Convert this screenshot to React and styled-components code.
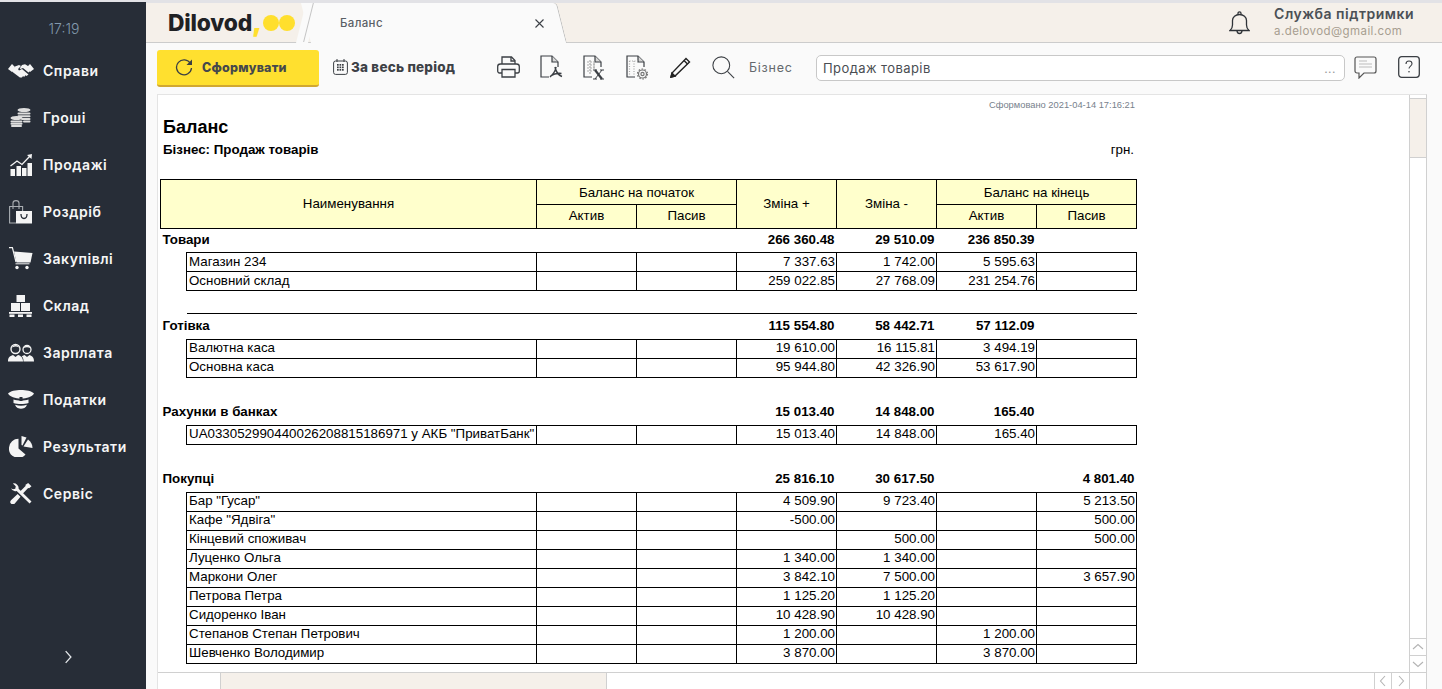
import React from "react";
import styled, { createGlobalStyle } from "styled-components";

const Global = createGlobalStyle`
  html, body { margin: 0; padding: 0; height: 100%; overflow: hidden; background: #fafafa; }
  #root { height: 100%; }
  * { box-sizing: border-box; }
`;

const UI = `"Inter", "Noto Sans", sans-serif`;
const DOC = `"Liberation Sans", Arial, sans-serif`;

const Shell = styled.div`
  display: grid;
  grid-template-columns: 146px 1fr;
  width: 1442px;
  height: 689px;
  overflow: hidden;
  font-family: ${UI};
`;

const Sidebar = styled.aside`
  background: #272d37;
  border-top: 2px solid #e2e2e6;
  display: flex;
  flex-direction: column;
  color: #fff;
`;
const Clock = styled.div`
  height: 45px;
  padding: 18px 18px 0 0;
  text-align: center;
  font-size: 14px;
  line-height: 18px;
  font-weight: 300;
  color: #8399ad;
  letter-spacing: 0;
`;
const Nav = styled.nav`
  display: flex;
  flex-direction: column;
  flex: 1;
`;
const NavItem = styled.a`
  height: 47px;
  display: flex;
  align-items: center;
  padding-left: 7px;
  gap: 9px;
  font-size: 14px;
  font-weight: 600;
  letter-spacing: 0.55px;
  color: #f6f6f6;
`;
const NavIcon = styled.span`
  width: 27px;
  height: 27px;
  display: flex;
  align-items: center;
  justify-content: center;
  flex: none;
`;
const Expand = styled.div`
  height: 41px;
  padding-left: 61px;
  color: #dfe3e8;
`;

const Main = styled.main`
  display: flex;
  flex-direction: column;
  min-width: 0;
  background: #fafafa;
`;

const Strip = styled.header`
  height: 43px;
  background: #f5f0ea;
  border-top: 3px solid #e2e2e6;
  border-bottom: 1px solid #cccccc;
  display: flex;
  align-items: stretch;
  padding-left: 1px;
`;
const LogoTab = styled.div`
  position: relative;
  z-index: 1;
  width: 162px;
  display: flex;
  align-items: center;
  padding-left: 21px;
  &::after {
    content: "";
    position: absolute;
    top: 0;
    bottom: 0;
    right: 0;
    width: 1px;
    background: #c4c4c4;
    transform: skewX(-14deg);
    transform-origin: center;
  }
`;
const LogoText = styled.span`
  font-size: 22.8px;
  font-weight: 800;
  letter-spacing: -0.2px;
  color: #1f2124;
  line-height: 30px;
  display: inline-flex;
  align-items: baseline;
`;
const LogoComma = styled.span`
  color: #ffdf2d;
  font-weight: 900;
  font-size: 27px;
  line-height: 20px;
`;
const LogoDot = styled.span`
  display: inline-block;
  width: 16px;
  height: 16px;
  border-radius: 50%;
  background: #ffdf2d;
  margin-left: ${p => p.$first ? "1px" : "0"};
`;
const ActiveTab = styled.div`
  position: relative;
  width: 252px;
  margin-left: 1px;
  margin-bottom: -1px;
  padding-left: 30px;
  padding-right: 18px;
  display: flex;
  align-items: center;
  justify-content: space-between;
  font-size: 11.5px;
  font-weight: 500;
  letter-spacing: 0.35px;
  color: #5a5f66;
  z-index: 0;
  &::before {
    content: "";
    position: absolute;
    inset: 0 0 0 -4px;
    background: #fafafa;
    border-right: 1px solid #bdbdbd;
    border-top-right-radius: 4px;
    transform: skewX(14deg);
    z-index: -1;
  }
  &::after {
    content: "";
    position: absolute;
    left: -9px;
    top: 0;
    bottom: 0;
    width: 12px;
    background: #fafafa;
    transform: skewX(-14deg);
    z-index: -1;
  }
`;
const StripRight = styled.div`
  margin-left: auto;
  display: flex;
  align-items: center;
  padding-right: 28px;
  gap: 24px;
`;
const Support = styled.div`
  display: flex;
  flex-direction: column;
  gap: 3px;
  margin-top: -2px;
`;
const SupportName = styled.div`
  font-size: 14px;
  line-height: 17px;
  font-weight: 600;
  letter-spacing: 0.5px;
  color: #4b5056;
`;
const SupportMail = styled.div`
  font-size: 11.5px;
  line-height: 13px;
  letter-spacing: 0.42px;
  color: #a79e90;
`;

const Toolbar = styled.div`
  height: 51px;
  display: flex;
  align-items: flex-start;
  padding: 7px 0 0 11px;
`;
const BuildButton = styled.button`
  width: 162px;
  height: 37px;
  border: none;
  border-bottom: 2px solid #d1a831;
  border-radius: 3px;
  background: #ffe02f;
  display: flex;
  align-items: center;
  padding: 0 0 0 18px;
  gap: 9px;
  font-family: ${UI};
  font-size: 12.5px;
  font-weight: 800;
  letter-spacing: 0.2px;
  color: #45484c;
`;
const PeriodButton = styled.div`
  display: flex;
  align-items: center;
  gap: 3px;
  height: 34px;
  margin-left: 14px;
  font-size: 13.5px;
  font-weight: 800;
  letter-spacing: 0.2px;
  color: #3d4146;
  width: 153px;
`;
const IconBar = styled.div`
  display: flex;
  align-items: center;
  height: 34px;
  gap: 20px;
  margin-left: 11px;
`;
const ToolIcon = styled.span`
  width: 23px;
  height: 26px;
  display: flex;
  align-items: center;
  justify-content: center;
`;
const FieldLabel = styled.span`
  height: 34px;
  display: flex;
  align-items: center;
  margin-left: 14px;
  width: 67px;
  font-size: 12.5px;
  letter-spacing: 0.75px;
  color: #64686d;
`;
const Field = styled.div`
  width: 529px;
  height: 26px;
  margin-top: 5px;
  background: #fff;
  border: 1px solid #c8c8c8;
  border-radius: 5px;
  display: flex;
  align-items: center;
  justify-content: space-between;
  padding: 0 8px 0 6px;
  font-size: 13px;
  letter-spacing: 0.42px;
  color: #4a4e53;
`;
const FieldDots = styled.span`
  color: #9a9a9a;
  font-size: 12px;
  letter-spacing: 0.5px;
`;
const EndIcon = styled.span`
  height: 34px;
  display: flex;
  align-items: center;
  margin-left: ${p => p.$gap}px;
`;

const Panel = styled.section`
  flex: 1;
  margin: 0 15px 0 11px;
  min-height: 0;
  background: #fff;
  border: 1px solid #e4e4e4;
  border-bottom: none;
  border-right: 1px solid #d0d0d0;
  display: grid;
  grid-template-columns: 1fr 17px;
  grid-template-rows: 1fr 17px;
`;
const ReportArea = styled.div`
  overflow: hidden;
  padding-left: 2px;
  font-family: ${DOC};
  color: #000;
  min-height: 0;
`;
const Report = styled.div`
  width: 976px;
`;
const Stamp = styled.div`
  height: 21px;
  padding: 5px 1px 0 0;
  text-align: right;
  font-size: 9.33px;
  line-height: 11px;
  color: #77818c;
`;
const Title = styled.h1`
  margin: 0;
  padding-left: 3px;
  font-size: 18px;
  line-height: 22px;
  font-weight: 700;
`;
const Meta = styled.div`
  display: flex;
  justify-content: space-between;
  padding: 4px 2px 0 3px;
  height: 41px;
  font-size: 13.33px;
  line-height: 16px;
`;
const MetaName = styled.b`
  font-weight: 700;
`;
const Sheet = styled.table`
  border-collapse: collapse;
  table-layout: fixed;
  width: 976px;
  font-size: 13.33px;
  line-height: 15px;
`;
const HeadCell = styled.th`
  background: #ffffcc;
  border: 1px solid #000;
  font-weight: 400;
  text-align: center;
  padding: 0 0 ${p => p.$lift || 0}px;
  height: ${p => p.$h || 25}px;
`;
const TitleRow = styled.tr`
  height: ${p => p.$first ? 24 : 23}px;
  font-weight: 700;
`;
const TitleName = styled.td`
  padding: 0 0 ${p => p.$first ? 2 : 3}px 2px;
`;
const TitleValue = styled.td`
  padding: 0 2px ${p => p.$first ? 2 : 3}px 0;
  text-align: right;
`;
const Gap = styled.tr`
  height: ${p => p.$h}px;
`;
const RuleCell = styled.td`
  padding: 0;
  border-bottom: ${p => p.$rule ? "1px solid #000" : "none"};
`;
const DataRow = styled.tr`
  height: 19px;
`;
const NameCell = styled.td`
  border: 1px solid #000;
  padding: 0 0 2px 2px;
  white-space: nowrap;
  overflow: hidden;
`;
const ValueCell = styled.td`
  border: 1px solid #000;
  padding: 0 1px 2px 0;
  text-align: right;
`;

const VScroll = styled.div`
  border-left: 1px solid #d0d0d0;
  display: flex;
  flex-direction: column;
  min-height: 0;
`;
const VTrackTop = styled.div`
  height: 4px;
  border-bottom: 1px solid #d0d0d0;
`;
const VThumb = styled.div`
  height: 59px;
  background: #f5f0ea;
  border-bottom: 1px solid #d0d0d0;
`;
const VTrack = styled.div`
  flex: 1;
`;
const ScrollBtn = styled.div`
  height: 17px;
  border-top: 1px solid #d0d0d0;
  display: flex;
  align-items: center;
  justify-content: center;
`;
const HScroll = styled.div`
  grid-column: 1;
  border-top: 1px solid #d0d0d0;
  display: flex;
`;
const HStart = styled.div`
  width: 63px;
  border-right: 1px solid #d0d0d0;
`;
const HThumb = styled.div`
  width: 386px;
  background: #f5f0ea;
  border-right: 1px solid #d0d0d0;
`;
const HTrack = styled.div`
  flex: 1;
  border-right: 1px solid #d0d0d0;
`;
const HBtn = styled.div`
  width: 17px;
  border-right: ${p => p.$end ? "none" : "1px solid #d0d0d0"};
  display: flex;
  align-items: center;
  justify-content: center;
`;
const Corner = styled.div`
  border-top: 1px solid #d0d0d0;
  border-left: 1px solid #d0d0d0;
`;

/* ---------- sidebar drawings ---------- */
const W = "#f4f4f4";
const BG = "#272d37";
const HandshakeIcon = () => (
  <svg width="26" height="16" viewBox="0 0 26 16">
    <path fill={W} d="M0 6 4 1l3 3L4 9zM26 6l-4-5-3 3 3 5z"/>
    <path fill={W} d="M7 3.500 11 2l2 1-3 3 1 1.500 3-1.500 6.500 5.500-2 1.500-1.200-.7-.8 1.500-1.600-.6-1 1.200-2 .2-7-5.300-1.300-1.500z"/>
    <path fill={W} d="M14 2l3-.7 3 1.700 2 5-1.500 1.500-5.500-4.500-2.500 1-.8-.5z"/>
  </svg>
);
const CoinsIcon = () => (
  <svg width="21" height="19" viewBox="0 0 21 19" fill="#dedede">
    <ellipse cx="14" cy="2" rx="6.500" ry="2"/>
    <rect x="7.500" y="4.500" width="13" height="2" rx="1"/>
    <rect x="7.500" y="7.200" width="13" height="2" rx="1"/>
    <rect x="11" y="9.900" width="9.500" height="2" rx="1"/>
    <rect x="13" y="12.600" width="7.500" height="2" rx="1"/>
    <ellipse cx="6.500" cy="10" rx="6" ry="2"/>
    <rect x=".5" y="12.400" width="12" height="2" rx="1"/>
    <rect x=".5" y="14.700" width="12" height="2" rx="1"/>
    <rect x="1" y="17" width="11" height="2" rx="1"/>
  </svg>
);
const ChartIcon = () => (
  <svg width="22" height="22" viewBox="0 0 22 22" fill={W}>
    <rect x="0.500" y="15" width="4.500" height="7"/>
    <rect x="6.500" y="12" width="4.500" height="10"/>
    <rect x="12" y="14" width="4.500" height="8"/>
    <rect x="17.500" y="9" width="4.500" height="13"/>
    <path fill="none" stroke={W} strokeWidth="1.300" d="M.5 12 7 7l5 3.500L20 2"/>
    <path d="M17 1l5-1-.5 5z"/>
  </svg>
);
const BagIcon = () => (
  <svg width="23" height="24" viewBox="0 0 23 24">
    <path fill="none" stroke="#a9adb2" strokeWidth="1.100" d="M7 23H.6V6.500h13V11"/>
    <path fill="none" stroke="#a9adb2" strokeWidth="1.100" d="M4 9V3C4 1.500 5.500.6 7 .6s3 .9 3 2.400v6"/>
    <path fill={W} d="M7 11h16v12.500H7z"/>
    <path fill="none" stroke={BG} strokeWidth="1.300" d="M12 14c0 6 6 6 6 0"/>
  </svg>
);
const CartIcon = () => (
  <svg width="24" height="23" viewBox="0 0 24 23" fill={W}>
    <path fill="none" stroke={W} strokeWidth="1.200" d="M0 .6h3.400L7 15"/>
    <path d="M5 4.500l18.500 1.500-2 9.500H7.500z"/>
    <circle cx="8" cy="20.500" r="1.700"/><circle cx="18" cy="20.500" r="1.700"/>
    <rect x="6.500" y="16.300" width="14" height="1"/>
  </svg>
);
const BoxesIcon = () => (
  <svg width="23" height="22" viewBox="0 0 23 22" fill={W}>
    <rect x="7.500" y="0" width="8.500" height="7"/>
    <rect x="2" y="8" width="9" height="8"/>
    <rect x="12" y="8" width="9" height="8"/>
    <rect x="0" y="17" width="23" height="1.800"/>
    <path d="M.5 19.500h5V22h-5zM9 19.500h5V22H9zM17.500 19.500h5V22h-5z"/>
  </svg>
);
const PeopleIcon = () => (
  <svg width="26" height="19" viewBox="0 0 26 19">
    <path fill={W} d="M0 18.500c0-4 1.500-5.500 5-6.500l2.500 2 2.500-2c3 .9 5 2.500 5 6.500z"/>
    <circle cx="7.500" cy="6" r="4.500" fill="none" stroke={W} strokeWidth="1.400"/>
    <path fill={W} d="M4 4.500C5 1 10 1 11 4.500 8.500 3 6.500 3.500 4 4.500z"/>
    <path fill={W} d="M15.500 18.500c.2-3-1-4.500-1.800-5.200l2.800-1.300 2.500 2 2.500-2c3 1 4.500 2.500 4.500 6.500z"/>
    <circle cx="19" cy="6.500" r="4" fill="none" stroke={W} strokeWidth="1.300"/>
    <path fill={W} d="M15.500 5c1-3 6-3 7 0-2.500-1-4.500-1-7 0z"/>
  </svg>
);
const CapIcon = () => (
  <svg width="26" height="19" viewBox="0 0 26 19" fill={W}>
    <path d="M0 3.500C2 1 8 0 13 0s11 1 13 3.500C24 7 19 8.500 13 8.500S2 7 0 3.500z"/>
    <path d="M5.500 9.500c4 1.300 11 1.300 15 0v3.500c-4 1.300-11 1.300-15 0z"/>
    <path d="M7 14.800c4 1.200 8 1.200 12 0-1 3-4 4-6 4s-5-1-6-4z"/>
    <rect x="11.500" y="7" width="3" height="4" fill={BG}/>
  </svg>
);
const PieIcon = () => (
  <svg width="24" height="21" viewBox="0 0 24 21" fill={W}>
    <path d="M9.500 2.800v9.700l7 6A9.400 9.400 0 0 1 0 11.500a9.500 9.500 0 0 1 9.500-8.700z"/>
    <path d="M12.500 0l5 1.500-4 8-1-.6z"/>
    <path d="M19 3.500c2.800 2 4.500 5 4.500 8.500l-9-1.500z"/>
  </svg>
);
const ToolsIcon = () => (
  <svg width="22" height="21" viewBox="0 0 23 22" fill={W}>
    <path d="M19 0l3.500 3.500-2.500 2-1-.3L12 12.500 9.500 10l7-7.200L16 2z"/>
    <path d="M1 5.500a5 5 0 0 0 6 2.800L20.500 21.500l2-2L9 6A5 5 0 0 0 3 .5l3 3-.5 2.500-2.500.5z"/>
    <path d="M8 11.500l3 3-6 7a2 2 0 0 1-4-3.500z"/>
  </svg>
);

const MENU = [
  ["Справи", HandshakeIcon], ["Гроші", CoinsIcon], ["Продажі", ChartIcon],
  ["Роздріб", BagIcon], ["Закупівлі", CartIcon], ["Склад", BoxesIcon],
  ["Зарплата", PeopleIcon], ["Податки", CapIcon], ["Результати", PieIcon], ["Сервіс", ToolsIcon],
];

/* ---------- toolbar drawings ---------- */
const S = "#3b3f44";
const RefreshIcon = () => (
  <svg width="18" height="18" viewBox="0 0 18 18" fill="none" stroke={S} strokeWidth="1.300">
    <path d="M15.500 4.500A7.500 7.500 0 1 0 16.500 9"/>
    <path fill={S} stroke="none" d="M17 0.500v5.500h-5.500z"/>
  </svg>
);
const CalendarIcon = () => (
  <svg width="15" height="16" viewBox="0 0 15 16" fill={S}>
    <rect x=".6" y="2" width="13.800" height="13.400" rx="2" fill="none" stroke={S} strokeWidth="1"/>
    <path d="M3.500 0h1v3h-1zM10.500 0h1v3h-1z"/>
    {[4, 6.500, 9].map(x => [5, 7.500, 10].map(y => <rect key={x + "-" + y} x={x} y={y} width="1.700" height="1.700"/>))}
  </svg>
);
const PrinterIcon = () => (
  <svg width="23" height="22" viewBox="0 0 23 22" fill="none" stroke={S} strokeWidth="1.300">
    <path d="M5 8V1h9.500L18 4.500V8"/><path d="M14 1v4h4"/>
    <path d="M5 17H2.500C1.500 17 .7 16 .7 15v-4.500C.7 9 2 8 3.500 8h16c1.500 0 2.800 1 2.800 2.500V15c0 1-.8 2-1.800 2H18"/>
    <path d="M5 13.500h13v7.500H5z"/>
  </svg>
);
const Doc = ({ children, light }) => (
  <svg width="23" height="25" viewBox="0 0 23 25" fill="none" stroke={S} strokeWidth="1.200">
    <path d="M9 22H1V1h11l6 6v5"/><path d="M12 1v6h6" fill="#d8d8d8"/>
    {light}
    {children}
  </svg>
);
const PdfIcon = () => (
  <Doc>
    <path d="M16 12c-.5 4-2.500 7-6 10M15 12c1 5 3 8 7 9.500M10.500 21c3-2 7-3 11-2.500" strokeWidth="1.500"/>
  </Doc>
);
const XlsIcon = () => (
  <Doc light={<path stroke="#aaa" strokeDasharray="2 1" d="M4 7h9M4 10h9M4 13h9M4 16h5M7 5v14M11 8v6"/>}>
    <path d="M10 15h4M17 15h4M10 24h4M17 24h4" strokeWidth="1"/>
    <path d="M12 15l7 9" strokeWidth="2.200"/><path d="M19 15l-7 9" strokeWidth="1"/>
  </Doc>
);
const SetIcon = () => (
  <Doc light={<path stroke="#aaa" strokeDasharray="1 1.500" d="M3.500 6h11M3.500 6v14M8 6v14"/>}>
    <circle cx="16.500" cy="19" r="4" stroke="#777" fill="#fafafa"/>
    <circle cx="16.500" cy="19" r="5" stroke="#777" strokeWidth="1.200" strokeDasharray="1.600 1.540"/>
    <circle cx="16.500" cy="19" r="1.600" stroke="#777"/>
  </Doc>
);
const PencilIcon = () => (
  <svg width="22" height="22" viewBox="0 0 22 22" fill="none" stroke="#222" strokeWidth="1.400">
    <path d="M5 20l-4 1 1-4L16 2.500l3.500 3.500z"/>
    <path d="M14 4.500l3.500 3.500"/><path d="M1 21l1-4 3 3z" fill="#222"/>
  </svg>
);
const SearchIcon = () => (
  <svg width="26" height="25" viewBox="0 0 26 25" fill="none" stroke={S} strokeWidth="1.200">
    <circle cx="10.500" cy="10" r="9.500"/><path d="M17.500 17l7.500 7.500"/>
  </svg>
);
const ChatIcon = () => (
  <svg width="23" height="23" viewBox="0 0 23 23" fill="none" stroke="#555" strokeWidth="1.200">
    <path d="M3 1h17c1.200 0 2 .8 2 2v12c0 1.200-.8 2-2 2H10l-5 5v-5H3c-1.200 0-2-.8-2-2V3c0-1.200.8-2 2-2z"/>
    <path stroke="#bbb" d="M5 5h8M5 8h13M5 11h13"/>
  </svg>
);
const HelpIcon = () => (
  <svg width="22" height="22" viewBox="0 0 22 22" fill="none" stroke="#3b3f44" strokeWidth="1.300">
    <rect x=".7" y=".7" width="20.600" height="20.600" rx="3"/>
    <path d="M8 8c0-2 1.200-3 3-3s3 1 3 2.800c0 2.200-3 2.400-3 4.700" strokeWidth="1.100"/>
    <circle cx="11" cy="15.700" r=".8" fill="#3b3f44" stroke="none"/>
  </svg>
);
const BellIcon = () => (
  <svg width="21" height="24" viewBox="0 0 21 24" fill="none" stroke="#2f3338" strokeWidth="1.300">
    <path d="M1 19.500c1.800-1.500 2.500-3 2.500-5.500V9.500C3.500 6 6.500 3.500 10.500 3.500s7 2.500 7 6V14c0 2.500.7 4 2.500 5.500z"/>
    <path d="M9 3.500V2.300a1.500 1.500 0 0 1 3 0v1.200M8 19.500c0 4 5 4 5 0"/>
  </svg>
);
const CloseIcon = () => (
  <svg width="9" height="9" viewBox="0 0 9 9" stroke="#3c4046" strokeWidth="1.100"><path d="M.5.5l8 8M8.500.5l-8 8"/></svg>
);
const Chev = ({ d, size = 12, color = "#b4b4b4" }) => {
  const paths = { up: "M1 8l5-4.500L11 8", down: "M1 4l5 4.500L11 4", left: "M8 1L3.500 6 8 11", right: "M4 1l4.500 5L4 11" };
  return <svg width={size} height={size} viewBox="0 0 12 12" fill="none" stroke={color} strokeWidth="1.100"><path d={paths[d]}/></svg>;
};

/* ---------- report data ---------- */
const SECTIONS = [
  { title: "Товари", totals: ["266 360.48", "29 510.09", "236 850.39", ""], rows: [
    ["Магазин 234", "7 337.63", "1 742.00", "5 595.63", ""],
    ["Основний склад", "259 022.85", "27 768.09", "231 254.76", ""],
  ], rule: true },
  { title: "Готівка", totals: ["115 554.80", "58 442.71", "57 112.09", ""], rows: [
    ["Валютна каса", "19 610.00", "16 115.81", "3 494.19", ""],
    ["Основна каса", "95 944.80", "42 326.90", "53 617.90", ""],
  ] },
  { title: "Рахунки в банках", totals: ["15 013.40", "14 848.00", "165.40", ""], rows: [
    ["UA033052990440026208815186971 у АКБ \"ПриватБанк\"", "15 013.40", "14 848.00", "165.40", ""],
  ] },
  { title: "Покупці", totals: ["25 816.10", "30 617.50", "", "4 801.40"], rows: [
    ["Бар \"Гусар\"", "4 509.90", "9 723.40", "", "5 213.50"],
    ["Кафе \"Ядвіга\"", "-500.00", "", "", "500.00"],
    ["Кінцевий споживач", "", "500.00", "", "500.00"],
    ["Луценко Ольга", "1 340.00", "1 340.00", "", ""],
    ["Маркони Олег", "3 842.10", "7 500.00", "", "3 657.90"],
    ["Петрова Петра", "1 125.20", "1 125.20", "", ""],
    ["Сидоренко Іван", "10 428.90", "10 428.90", "", ""],
    ["Степанов Степан Петрович", "1 200.00", "", "1 200.00", ""],
    ["Шевченко Володимир", "3 870.00", "", "3 870.00", ""],
  ] },
];

const Section = ({ s, first, last }) => (
  <>
    <TitleRow $first={first}>
      <TitleName $first={first} colSpan={4}>{s.title}</TitleName>
      {s.totals.map((t, i) => <TitleValue $first={first} key={i}>{t}</TitleValue>)}
    </TitleRow>
    {s.rows.map(r => (
      <DataRow key={r[0]}>
        <td />
        <NameCell>{r[0]}</NameCell>
        <ValueCell />
        <ValueCell />
        {r.slice(1).map((v, i) => <ValueCell key={i}>{v}</ValueCell>)}
      </DataRow>
    ))}
    {!last && (s.rule ? (
      <>
        <Gap $h={23}>
          <td />
          <RuleCell $rule colSpan={7} />
        </Gap>
        <Gap $h={1}><td colSpan={8} /></Gap>
      </>
    ) : (
      <Gap $h={25}><td colSpan={8} /></Gap>
    ))}
  </>
);

export default function App() {
  return (
    <>
      <Global />
      <Shell>
        <Sidebar>
          <Clock>17:19</Clock>
          <Nav>
            {MENU.map(([label, Icon]) => (
              <NavItem key={label}>
                <NavIcon><Icon /></NavIcon>
                {label}
              </NavItem>
            ))}
          </Nav>
          <Expand><Chev d="right" size={14} color="#e4e7ea" /></Expand>
        </Sidebar>
        <Main>
          <Strip>
            <LogoTab>
              <LogoText>
                Dilovod<LogoComma>,</LogoComma><LogoDot $first /><LogoDot />
              </LogoText>
            </LogoTab>
            <ActiveTab>
              <span>Баланс</span>
              <CloseIcon />
            </ActiveTab>
            <StripRight>
              <BellIcon />
              <Support>
                <SupportName>Служба підтримки</SupportName>
                <SupportMail>a.delovod@gmail.com</SupportMail>
              </Support>
            </StripRight>
          </Strip>
          <Toolbar>
            <BuildButton><RefreshIcon />Сформувати</BuildButton>
            <PeriodButton><CalendarIcon />За весь період</PeriodButton>
            <IconBar>
              <ToolIcon><PrinterIcon /></ToolIcon>
              <ToolIcon><PdfIcon /></ToolIcon>
              <ToolIcon><XlsIcon /></ToolIcon>
              <ToolIcon><SetIcon /></ToolIcon>
              <ToolIcon><PencilIcon /></ToolIcon>
              <ToolIcon><SearchIcon /></ToolIcon>
            </IconBar>
            <FieldLabel>Бізнес</FieldLabel>
            <Field>Продаж товарів<FieldDots>...</FieldDots></Field>
            <EndIcon $gap={9}><ChatIcon /></EndIcon>
            <EndIcon $gap={21}><HelpIcon /></EndIcon>
          </Toolbar>
          <Panel>
            <ReportArea>
              <Report>
                <Stamp>Сформовано 2021-04-14 17:16:21</Stamp>
                <Title>Баланс</Title>
                <Meta><MetaName>Бізнес: Продаж товарів</MetaName><span>грн.</span></Meta>
                <Sheet>
                  <colgroup>
                    <col style={{ width: 26 }} /><col style={{ width: 350 }} />
                    <col style={{ width: 100 }} /><col style={{ width: 100 }} />
                    <col style={{ width: 100 }} /><col style={{ width: 100 }} />
                    <col style={{ width: 100 }} /><col style={{ width: 100 }} />
                  </colgroup>
                  <thead>
                    <tr>
                      <HeadCell colSpan={2} rowSpan={2} $lift={2}>Наименування</HeadCell>
                      <HeadCell colSpan={2}>Баланс на початок</HeadCell>
                      <HeadCell rowSpan={2} $lift={2}>Зміна +</HeadCell>
                      <HeadCell rowSpan={2} $lift={2}>Зміна -</HeadCell>
                      <HeadCell colSpan={2}>Баланс на кінець</HeadCell>
                    </tr>
                    <tr>
                      <HeadCell $h={24} $lift={2}>Актив</HeadCell>
                      <HeadCell $h={24} $lift={2}>Пасив</HeadCell>
                      <HeadCell $h={24} $lift={2}>Актив</HeadCell>
                      <HeadCell $h={24} $lift={2}>Пасив</HeadCell>
                    </tr>
                  </thead>
                  <tbody>
                    {SECTIONS.map((s, i) => <Section key={s.title} s={s} first={i === 0} last={i === SECTIONS.length - 1} />)}
                  </tbody>
                </Sheet>
              </Report>
            </ReportArea>
            <VScroll>
              <VTrackTop />
              <VThumb />
              <VTrack />
              <ScrollBtn><Chev d="up" /></ScrollBtn>
              <ScrollBtn><Chev d="down" /></ScrollBtn>
            </VScroll>
            <HScroll>
              <HStart />
              <HThumb />
              <HTrack />
              <HBtn><Chev d="left" /></HBtn>
              <HBtn $end><Chev d="right" /></HBtn>
            </HScroll>
            <Corner />
          </Panel>
        </Main>
      </Shell>
    </>
  );
}
